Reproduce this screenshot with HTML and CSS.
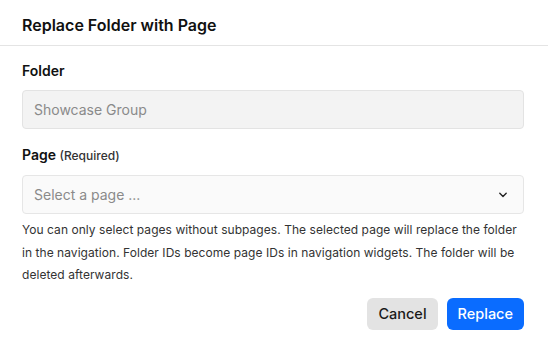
FILE: index.html
```html
<!DOCTYPE html>
<html lang="en">
<head>
    <meta charset="UTF-8">
    <meta name="viewport" content="width=device-width, initial-scale=1.0">
    <title>Replace Folder with Page</title>
    <link rel="stylesheet" href="styles.css">
</head>
<body>
    <div class="dialog">
        <div class="dialog-header">
            <h2>Replace Folder with Page</h2>
        </div>

        <div class="dialog-body">
            <label class="field-label">Folder</label>
            <div class="text-input disabled">Showcase Group</div>

            <label class="field-label page-label">Page <span class="hint">(Required)</span></label>
            <div class="select-input">
                <span class="placeholder">Select a page ...</span>
                <svg class="chevron" width="10" height="6" viewBox="0 0 10 6">
                    <path d="M1.8 1.3 L5 4.4 L8.2 1.3" fill="none" stroke="#222" stroke-width="1.4" stroke-linecap="round" stroke-linejoin="round"/>
                </svg>
            </div>

            <p class="help-text">
                You can only select pages without subpages. The selected page will replace the folder<br>
                in the navigation. Folder IDs become page IDs in navigation widgets. The folder will be<br>
                deleted afterwards.
            </p>

            <div class="actions">
                <button class="btn btn-cancel">Cancel</button>
                <button class="btn btn-primary">Replace</button>
            </div>
        </div>
    </div>
</body>
</html>
```

FILE: styles.css
```css
body {
    margin: 0;
    font-family: Inter, 'Noto Sans', sans-serif;
    background: white;
    color: #1a1a1a;
}

.dialog {
    width: 548px;
    height: 343px;
    background: white;
}

.dialog-header {
    padding: 13px 22px 8px;
    border-bottom: 1px solid #e4e4e4;
}

.dialog-header h2 {
    margin: 0;
    font-size: 16px;
    line-height: 24px;
    font-weight: 600;
    color: #111;
}

.dialog-body {
    padding: 15px 24px 0 22px;
}

.field-label {
    display: block;
    font-size: 14px;
    line-height: 20px;
    font-weight: 600;
    color: #111;
    margin-bottom: 9px;
}

.page-label {
    margin-top: 16px;
}

.hint {
    font-size: 12px;
    font-weight: 500;
    color: #333;
}

.text-input,
.select-input {
    box-sizing: border-box;
    height: 39px;
    padding: 0 11px;
    border-radius: 4px;
    font-size: 14px;
    display: flex;
    align-items: center;
}

.text-input.disabled {
    background: #f3f3f3;
    border: 1px solid #e3e3e3;
    color: #8a8a8a;
}

.select-input {
    background: #fafafa;
    border: 1px solid #e6e6e6;
    justify-content: space-between;
}

.placeholder {
    color: #8a8a8a;
}

.chevron {
    margin-right: 4px;
}

.help-text {
    margin: 5px -12px 0 0;
    font-size: 12px;
    letter-spacing: 0.05px;
    line-height: 22.5px;
    color: #333;
}

.actions {
    display: flex;
    justify-content: flex-end;
    gap: 9px;
    margin-top: 11px;
}

.btn {
    height: 32px;
    padding: 0 11px;
    border: none;
    border-radius: 6px;
    font-family: Inter, 'Noto Sans', sans-serif;
    font-size: 14.5px;
    font-weight: 500;
}

.btn-cancel {
    background: #e3e3e3;
    color: #1a1a1a;
}

.btn-primary {
    background: #0a6cff;
    color: white;
}
```
